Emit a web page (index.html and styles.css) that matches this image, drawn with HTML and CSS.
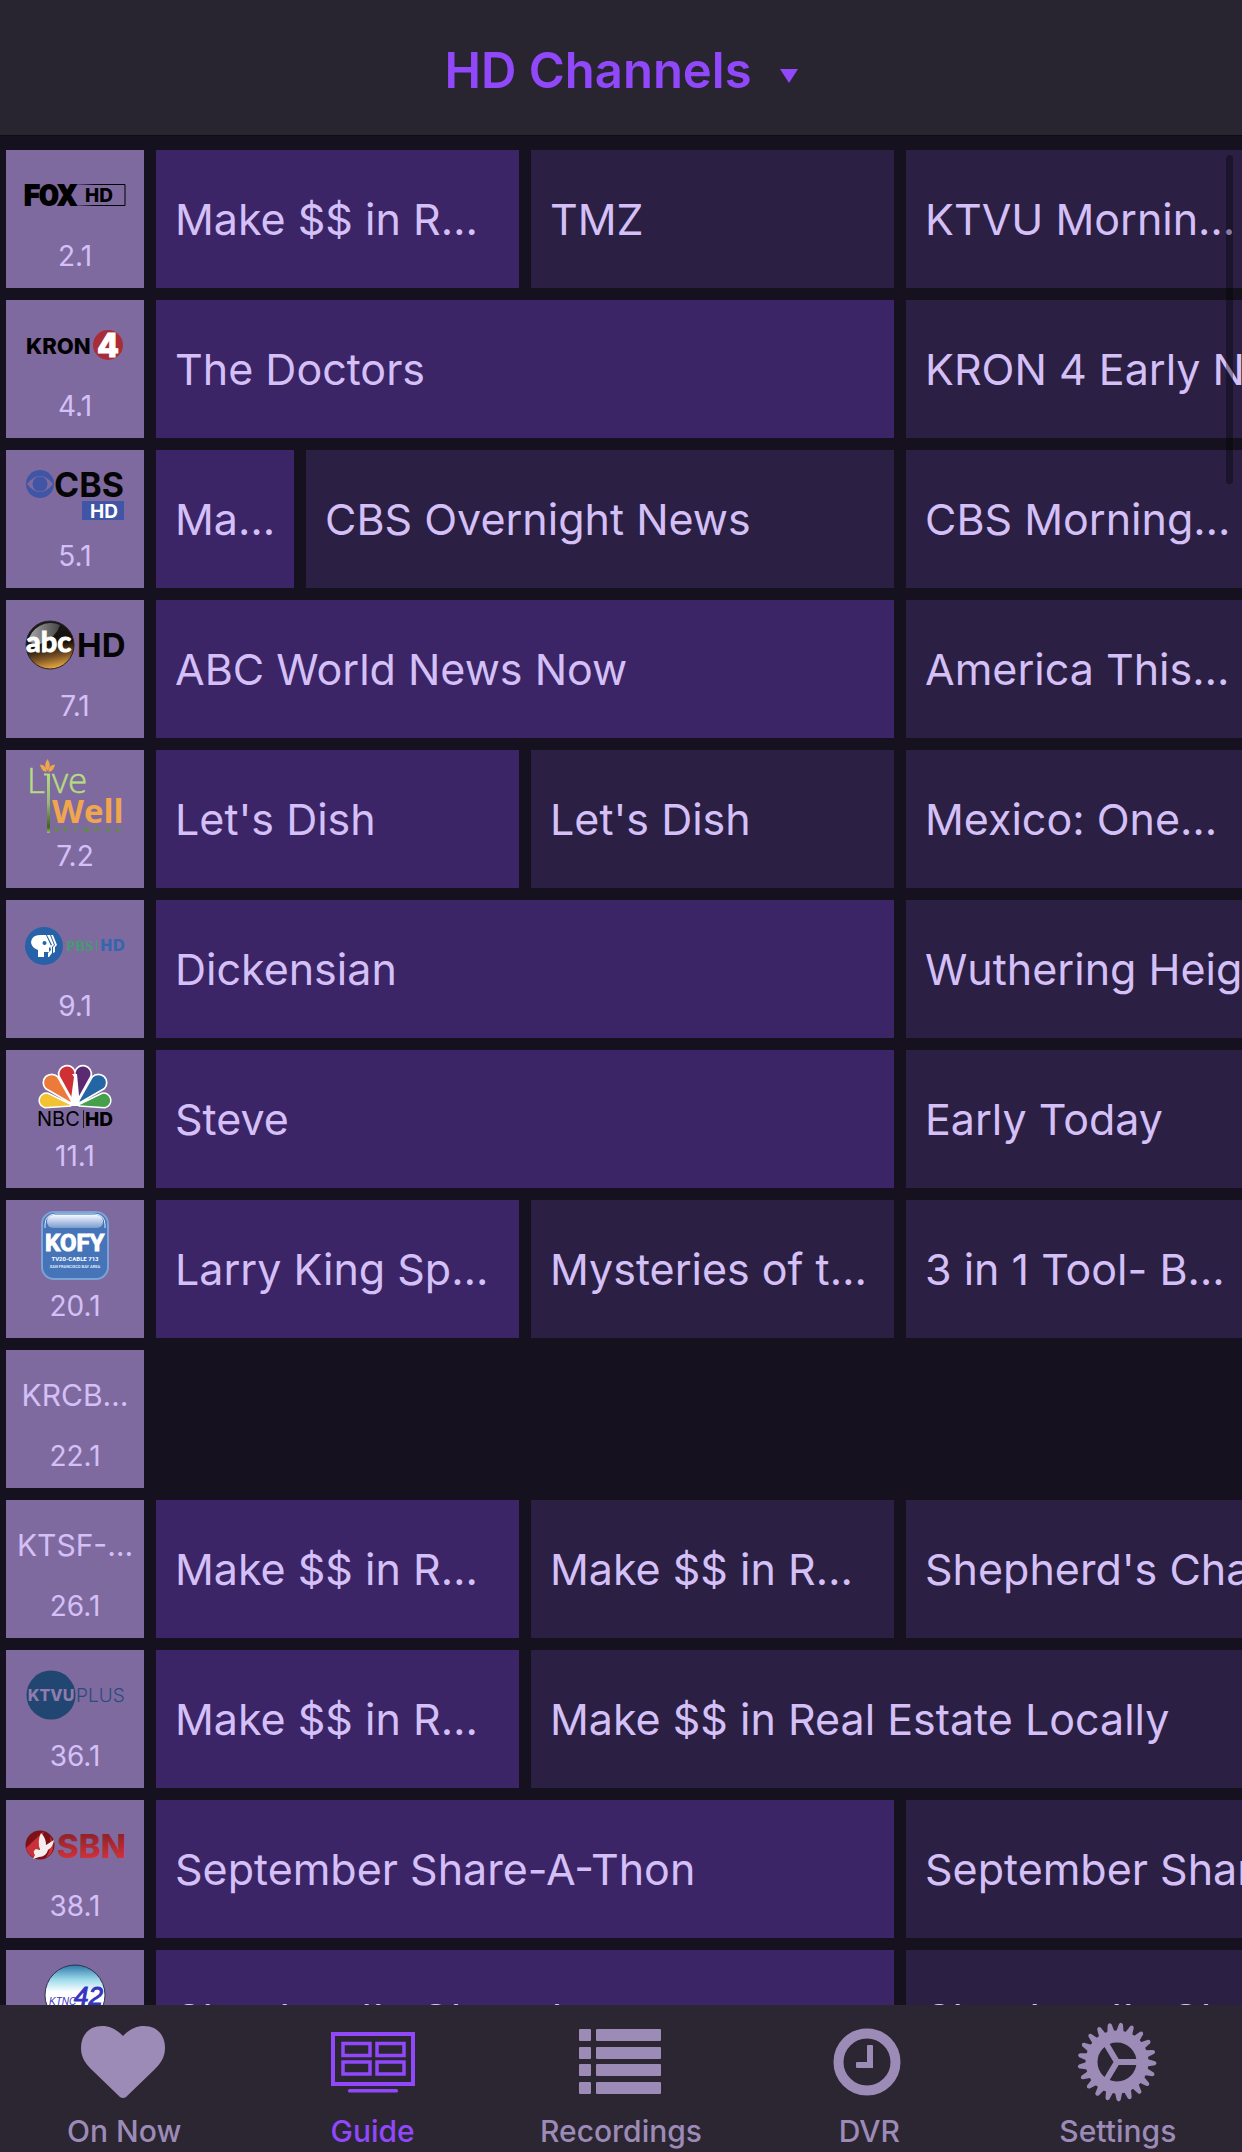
FILE: index.html
```html
<!DOCTYPE html>
<html lang="en">
<head>
<meta charset="utf-8">
<meta name="viewport" content="width=device-width, initial-scale=1">
<title>HD Channels</title>
<link rel="stylesheet" href="styles.css">
</head>
<body>
<header class="topbar">
  <button class="picker" type="button">HD Channels
    <svg class="caret" viewBox="0 0 18 14" aria-hidden="true"><path d="M0 0H18L9 14Z"/></svg>
  </button>
</header>

<main class="guide">
  <section class="row">
    <a class="channel" href="#">
      <svg class="logo" viewBox="0 0 138 90" role="img" aria-label="FOX HD">
        <defs><linearGradient id="foxline" gradientUnits="userSpaceOnUse" x1="70" y1="0" x2="119" y2="0"><stop offset="0" stop-opacity=".2"/><stop offset=".4"/></linearGradient></defs>
        <text class="narrow" x="18" y="55" font-size="28" stroke="#000" stroke-width="2">FOX</text>
        <path d="M71 34.5H119V55.5H71" fill="none" stroke="url(#foxline)"/>
        <text class="heavy" x="79" y="52" font-size="19">HD</text>
      </svg>
      <span class="number">2.1</span>
    </a>
    <a class="show now half" href="#">Make $$ in R…</a>
    <a class="show half" href="#">TMZ</a>
    <a class="show half" href="#">KTVU Mornin…</a>
  </section>

  <section class="row">
    <a class="channel" href="#">
      <svg class="logo" viewBox="0 0 138 90" role="img" aria-label="KRON 4">
        <text class="heavy" x="20" y="54" font-size="22">KRON</text>
        <circle cx="102" cy="45" r="15" fill="#a92d36"/>
        <text class="heavy" x="91" y="57" font-size="32" fill="#fff" stroke="#fff">4</text>
      </svg>
      <span class="number">4.1</span>
    </a>
    <a class="show now hour" href="#">The Doctors</a>
    <a class="show hour" href="#">KRON 4 Early News</a>
  </section>

  <section class="row">
    <a class="channel" href="#">
      <svg class="logo" viewBox="0 0 138 90" role="img" aria-label="CBS HD">
        <circle cx="34" cy="34" r="14" fill="#4055a5"/>
        <path d="M21 34Q34 18 47 34Q34 50 21 34Z" fill="#7f6a9f"/>
        <circle cx="34" cy="34" r="7.5" fill="#4055a5"/>
        <text class="bold" x="48" y="47" font-size="34" fill="#050505">CBS</text>
        <rect x="76" y="51" width="42" height="19" fill="#4055a5"/>
        <text class="bold" x="84" y="68" font-size="19" fill="#fff">HD</text>
      </svg>
      <span class="number">5.1</span>
    </a>
    <a class="show now short" href="#">Ma…</a>
    <a class="show long" href="#">CBS Overnight News</a>
    <a class="show half" href="#">CBS Morning…</a>
  </section>

  <section class="row">
    <a class="channel" href="#">
      <svg class="logo" viewBox="0 0 138 90" role="img" aria-label="abc HD">
        <defs>
          <linearGradient id="abcball" x1=".4" y1="0" x2=".6" y2="1"><stop offset="0" stop-color="#1a1a1a"/><stop offset=".5" stop-color="#15100c"/><stop offset=".75" stop-color="#7a5226"/><stop offset="1" stop-color="#f0b040"/></linearGradient>
          <linearGradient id="abcshine" x1="0" y1=".3" x2="1" y2=".3"><stop offset="0" stop-color="#aaa"/><stop offset="1" stop-color="#444"/></linearGradient>
        </defs>
        <circle cx="44" cy="45" r="24" fill="url(#abcball)" stroke="#2a2228"/>
        <path d="M22 42A23 23 0 0 1 54 25Q50 38 34 44Z" fill="url(#abcshine)"/>
        <text class="geo" x="20" y="52" font-size="29" fill="#fff" stroke="#fff">abc</text>
        <text class="bold" x="71" y="57" font-size="33" fill="#050505">HD</text>
      </svg>
      <span class="number">7.1</span>
    </a>
    <a class="show now hour" href="#">ABC World News Now</a>
    <a class="show half" href="#">America This…</a>
  </section>

  <section class="row">
    <a class="channel" href="#">
      <svg class="logo" viewBox="0 0 138 90" role="img" aria-label="Live Well Network">
        <defs><linearGradient id="stem" x1="0" y1="0" x2="0" y2="1"><stop offset="0" stop-color="#b4dc82"/><stop offset=".5" stop-color="#98b878"/><stop offset=".9" stop-color="#3f6416"/><stop offset="1" stop-color="#9cc070"/></linearGradient></defs>
        <g class="light" font-size="35" fill="#b4dc82" stroke="#b4dc82"><text x="21" y="43">L</text><text x="46" y="43">ve</text></g>
        <path d="M38 23.500H44V83H41V25.500H38Z" fill="url(#stem)"/>
        <g fill="#f0a64c"><path d="M41.500 9Q46 16 41.500 21Q37 16 41.500 9Z"/><path d="M34 14.500Q41 15 40.500 22Q35 21 34 14.500Z"/><path d="M49 14.500Q42 15 42.500 22Q48 21 49 14.500Z"/></g>
        <text class="humanist" x="46" y="73" font-size="33" fill="#f0a64c">Well</text>
        <text class="humanist" x="48 58 68 77 88 100 110" y="82" font-size="7" fill="#5f8f3c">NETWORK</text>
      </svg>
      <span class="number">7.2</span>
    </a>
    <a class="show now half" href="#">Let's Dish</a>
    <a class="show half" href="#">Let's Dish</a>
    <a class="show half" href="#">Mexico: One…</a>
  </section>

  <section class="row">
    <a class="channel" href="#">
      <svg class="logo" viewBox="0 0 138 90" role="img" aria-label="PBS HD">
        <circle cx="38" cy="46" r="19" fill="#2762a8"/>
        <path d="M32 57V50Q25 47 25 42Q26 35 34 35H40L45 46L43 48V52H38V57Z" fill="#fff"/>
        <path d="M41 35L44 35L48 45L46 47V53L43 57H42V53L45 50L44 46L46 45Z" fill="#fff"/>
        <path d="M45 35L47 35L51 45L49 47V52L47 53V47L49 45Z" fill="#fff"/>
        <circle cx="38.500" cy="43" r="2" fill="#2762a8"/>
        <text class="serif" x="60" y="51" font-size="15" fill="#3f9f6c">PBS</text>
        <path d="M90.500 40V51" stroke="#3f9f6c"/>
        <text class="wide" x="94" y="51" font-size="15" fill="#3465b0">HD</text>
      </svg>
      <span class="number">9.1</span>
    </a>
    <a class="show now hour" href="#">Dickensian</a>
    <a class="show hour" href="#">Wuthering Heights</a>
  </section>

  <section class="row">
    <a class="channel" href="#">
      <svg class="logo" viewBox="0 0 138 90" role="img" aria-label="NBC HD">
        <defs>
          <path id="feather" d="M0-5L-7.500-33A7.500 7.500 0 1 1 7.500-33Z"/>
        </defs>
        <g transform="translate(69 56)">
          <g fill="#fff" stroke="#fff" stroke-width="3.500" stroke-linejoin="round">
            <use href="#feather" transform="rotate(-79) scale(.88)"/><use href="#feather" transform="rotate(-45)"/><use href="#feather" transform="rotate(-14)"/>
            <use href="#feather" transform="rotate(14)"/><use href="#feather" transform="rotate(45)"/><use href="#feather" transform="rotate(79) scale(.88)"/>
            <path d="M-16 0L0-30L16 0Z" stroke="none"/>
          </g>
          <use href="#feather" transform="rotate(-79) scale(.88)" fill="#f3c232"/>
          <use href="#feather" transform="rotate(-45)" fill="#ec7a38"/>
          <use href="#feather" transform="rotate(-14)" fill="#cf3036"/>
          <use href="#feather" transform="rotate(14)" fill="#5c2a72"/>
          <use href="#feather" transform="rotate(45)" fill="#2465a4"/>
          <use href="#feather" transform="rotate(79) scale(.88)" fill="#46a04b"/>
          <path d="M-5 0L-1-29L-3-32H2L5 0Z" fill="#fff"/>
        </g>
        <text class="sans" x="31" y="76" font-size="20">NBC</text>
        <path d="M77.500 60V78" stroke="#222"/>
        <text class="heavy" x="79" y="76" font-size="19">HD</text>
      </svg>
      <span class="number">11.1</span>
    </a>
    <a class="show now hour" href="#">Steve</a>
    <a class="show hour" href="#">Early Today</a>
  </section>

  <section class="row">
    <a class="channel" href="#">
      <svg class="logo" viewBox="0 0 138 90" role="img" aria-label="KOFY TV20 Cable 713">
        <defs><linearGradient id="gloss" x1="0" y1="0" x2="0" y2="1"><stop offset="0" stop-color="#f4f8ff"/><stop offset="1" stop-color="#7a9ccf"/></linearGradient></defs>
        <rect x="36" y="12" width="66" height="67" rx="12" fill="#4674b8" stroke="#7da3d6" stroke-width="2"/>
        <path d="M39 28V25Q39 14 50 14H88Q99 14 99 25V28" fill="none" stroke="#dce8f8" stroke-width="1"/>
        <rect x="41" y="15" width="56" height="13" rx="6" fill="url(#gloss)"/>
        <text class="narrow" x="39" y="51" font-size="24" fill="#fff" stroke="#fff">KOFY</text>
        <text class="narrow middle" x="69" y="61" font-size="6" fill="#fff">TV20-CABLE 713</text>
        <text class="narrow middle" x="69" y="68" font-size="4" fill="#dce8f8">SAN FRANCISCO BAY AREA</text>
      </svg>
      <span class="number">20.1</span>
    </a>
    <a class="show now half" href="#">Larry King Sp…</a>
    <a class="show half" href="#">Mysteries of t…</a>
    <a class="show half" href="#">3 in 1 Tool- B…</a>
  </section>

  <section class="row">
    <a class="channel" href="#"><span class="callsign">KRCB…</span><span class="number">22.1</span></a>
  </section>

  <section class="row">
    <a class="channel" href="#"><span class="callsign">KTSF-…</span><span class="number">26.1</span></a>
    <a class="show now half" href="#">Make $$ in R…</a>
    <a class="show half" href="#">Make $$ in R…</a>
    <a class="show hour" href="#">Shepherd's Chapel</a>
  </section>

  <section class="row">
    <a class="channel" href="#">
      <svg class="logo" viewBox="0 0 138 90" role="img" aria-label="KTVU Plus">
        <circle cx="45" cy="45" r="24.500" fill="#214672"/>
        <text class="heavy middle" x="45" y="51" font-size="16" fill="#8f7cac">KTVU</text>
        <text class="thin" x="70" y="52" font-size="19" fill="#2b4c7c">PLUS</text>
      </svg>
      <span class="number">36.1</span>
    </a>
    <a class="show now half" href="#">Make $$ in R…</a>
    <a class="show hour" href="#">Make $$ in Real Estate Locally</a>
  </section>

  <section class="row">
    <a class="channel" href="#">
      <svg class="logo" viewBox="0 0 138 90" role="img" aria-label="SBN">
        <defs><linearGradient id="sbn" x1="0" y1="0" x2="0" y2="1"><stop offset=".2" stop-color="#8f2229"/><stop offset=".8" stop-color="#d0313a"/></linearGradient></defs>
        <circle cx="34" cy="45" r="14.500" fill="#7c1218"/>
        <path d="M20 48L38 31L30 58Q22 56 20 48Z" fill="#c93038"/>
        <path d="M44 36Q50 46 45 54L40 58Q46 48 44 36Z" fill="#c93038"/>
        <path d="M35 33Q40 38 40 45L48 40Q47 47 42 50Q40 57 33 57L27 59L29 55Q26 51 30 49L34 50Q31 41 35 33Z" fill="#f4efec"/>
        <text class="heavy" x="51" y="58" font-size="33" fill="url(#sbn)">SBN</text>
      </svg>
      <span class="number">38.1</span>
    </a>
    <a class="show now hour" href="#">September Share-A-Thon</a>
    <a class="show hour" href="#">September Share-A-Thon</a>
  </section>

  <section class="row">
    <a class="channel" href="#">
      <svg class="logo" viewBox="0 0 138 90" role="img" aria-label="KTNC 42">
        <defs><linearGradient id="sky" x1="0" y1="0" x2="0" y2="1"><stop offset="0" stop-color="#2d78a8"/><stop offset=".25" stop-color="#9fdcec"/><stop offset=".45" stop-color="#fff"/><stop offset="1" stop-color="#fff"/></linearGradient></defs>
        <circle cx="69" cy="45" r="30" fill="url(#sky)" stroke="#33304e"/>
        <text class="slant" x="43" y="55" font-size="10" fill="#3434c0">KTNC</text>
        <text class="slant" x="68" y="55" font-size="26" fill="#3434c0" stroke="#3434c0">42</text>
      </svg>
      <span class="number">42.1</span>
    </a>
    <a class="show now hour" href="#">Shepherd's Chapel</a>
    <a class="show hour" href="#">Shepherd's Chapel</a>
  </section>

  <div class="scroll-thumb" aria-hidden="true"></div>
</main>

<nav class="tabs">
  <a class="tab" href="#">
    <svg class="icon" viewBox="0 0 90 90" aria-hidden="true"><path d="M44 19C37 12 31 9 23 9C10 9 2 18 2 31C2 41 7 47 13 53L41 80Q44 82 47 80L75 53C81 47 86 41 86 31C86 18 78 9 65 9C57 9 51 12 44 19Z"/></svg>
    <span>On Now</span>
  </a>
  <a class="tab active" href="#">
    <svg class="icon" viewBox="0 0 90 90" aria-hidden="true">
      <g fill="none" stroke="currentColor" stroke-width="4"><rect x="5" y="17" width="80" height="50"/></g>
      <g fill="none" stroke="currentColor" stroke-width="3.500"><rect x="15" y="26.500" width="27" height="12"/><rect x="49" y="26.500" width="27" height="12"/><rect x="15" y="45" width="27" height="12"/><rect x="49" y="45" width="27" height="12"/></g>
      <rect x="20" y="72" width="50" height="3.500" rx="1.500"/>
    </svg>
    <span>Guide</span>
  </a>
  <a class="tab" href="#">
    <svg class="icon" viewBox="0 0 90 90" aria-hidden="true">
      <rect x="3" y="12" width="12" height="12" rx="1"/><rect x="20" y="12" width="65" height="12" rx="1"/>
      <rect x="3" y="30" width="12" height="12" rx="1"/><rect x="20" y="30" width="65" height="12" rx="1"/>
      <rect x="3" y="47" width="12" height="12" rx="1"/><rect x="20" y="47" width="65" height="12" rx="1"/>
      <rect x="3" y="65" width="12" height="12" rx="1"/><rect x="20" y="65" width="65" height="12" rx="1"/>
    </svg>
    <span>Recordings</span>
  </a>
  <a class="tab" href="#">
    <svg class="icon" viewBox="0 0 90 90" aria-hidden="true">
      <circle cx="43" cy="45" r="28.500" fill="none" stroke="currentColor" stroke-width="10"/>
      <path d="M43 29Q43 28 44 28H48Q49 28 49 29V51H33Q32 51 32 50V46Q32 45 33 45H43Z"/>
    </svg>
    <span>DVR</span>
  </a>
  <a class="tab" href="#">
    <svg class="icon" viewBox="0 0 90 90" aria-hidden="true">
      <defs>
        <path id="tooth" d="M-4-30L-2-38Q0-41 2-38L3.500-30Z"/>
        <g id="teeth"><use href="#tooth" transform="rotate(6)"/><use href="#tooth" transform="rotate(23.140)"/><use href="#tooth" transform="rotate(40.280)"/><use href="#tooth" transform="rotate(57.430)"/><use href="#tooth" transform="rotate(74.570)"/><use href="#tooth" transform="rotate(91.710)"/><use href="#tooth" transform="rotate(108.860)"/></g>
      </defs>
      <g transform="translate(44 45)">
        <use href="#teeth"/><use href="#teeth" transform="rotate(120)"/><use href="#teeth" transform="rotate(240)"/>
        <circle r="25.500" fill="none" stroke="currentColor" stroke-width="12"/>
        <path d="M0 0H22M0 0L-12-20M0 0L-12 20" stroke="currentColor" stroke-width="6"/>
      </g>
    </svg>
    <span>Settings</span>
  </a>
</nav>
</body>
</html>
```
FILE: styles.css
```css
* { box-sizing: border-box; }

body {
  margin: 0;
  height: 100vh;
  display: flex;
  flex-direction: column;
  overflow: hidden;
  background: #15111e;
  color: #d4c0f7;
  font-family: Inter, "Liberation Sans", sans-serif;
}

a { color: inherit; text-decoration: none; }

.topbar {
  flex: none;
  padding: 40px 0 33px;
  display: flex;
  justify-content: center;
  background: #282430;
  border-bottom: 1px solid #0f0c16;
}

.picker {
  display: flex;
  align-items: center;
  gap: 28px;
  padding: 0;
  border: 0;
  background: none;
  color: #9048fa;
  font: 600 49px/62px Inter, "Liberation Sans", sans-serif;
  cursor: pointer;
}

.caret { width: 18px; height: 14px; margin-top: 10px; fill: currentColor; }

.guide {
  position: relative;
  flex: 1;
  min-height: 0;
  overflow: hidden;
  display: flex;
  flex-direction: column;
  gap: 12px;
  padding: 14px 0 0 6px;
}

.row { flex: none; display: flex; gap: 12px; }

.channel {
  flex: none;
  width: 138px;
  height: 138px;
  background: #7f6a9f;
  text-align: center;
}

.logo { display: block; width: 138px; height: 90px; }
.number { display: block; font-size: 28px; line-height: 32px; }
.callsign { display: block; font-size: 30px; line-height: 90px; }

.show {
  flex: none;
  height: 138px;
  padding: 0 19px;
  overflow: hidden;
  white-space: nowrap;
  background: #2b1f44;
  font-size: 43px;
  line-height: 138px;
}
.now { background: #3c2567; }
.short { width: 138px; }
.half { width: 363px; }
.long { width: 588px; }
.hour { width: 738px; }

.scroll-thumb {
  position: absolute;
  top: 19px;
  right: 9px;
  width: 7px;
  height: 329px;
  border-radius: 4px;
  background: rgba(0, 0, 0, .35);
}

.tabs {
  flex: none;
  display: flex;
  padding: 12px 0 3px;
  background: #2b2632;
  color: #9d8bb7;
}
.tab {
  flex: 1;
  display: flex;
  flex-direction: column;
  align-items: center;
  gap: 6px;
  font-size: 30px;
  font-weight: 500;
  line-height: 36px;
}
.active { color: #9048fa; }
.icon { width: 90px; height: 90px; fill: currentColor; }

/* Lettering inside the channel logos */
.sans { font-weight: 400; }
.thin { font-weight: 300; }
.bold { font-weight: 700; }
.heavy { font-weight: 800; }
.middle { text-anchor: middle; }
.narrow { font-family: Roboto, sans-serif; font-weight: 700; }
.geo { font-family: Lato, sans-serif; font-weight: 700; }
.light { font-family: "Open Sans", sans-serif; font-weight: 300; stroke-width: .5px; }
.humanist { font-family: "Open Sans", sans-serif; font-weight: 700; }
.serif { font-family: "Liberation Serif", serif; font-weight: 700; }
.wide { font-family: "DejaVu Sans", sans-serif; font-weight: 700; }
.slant { font-family: "Liberation Sans", sans-serif; font-style: italic; }
```
